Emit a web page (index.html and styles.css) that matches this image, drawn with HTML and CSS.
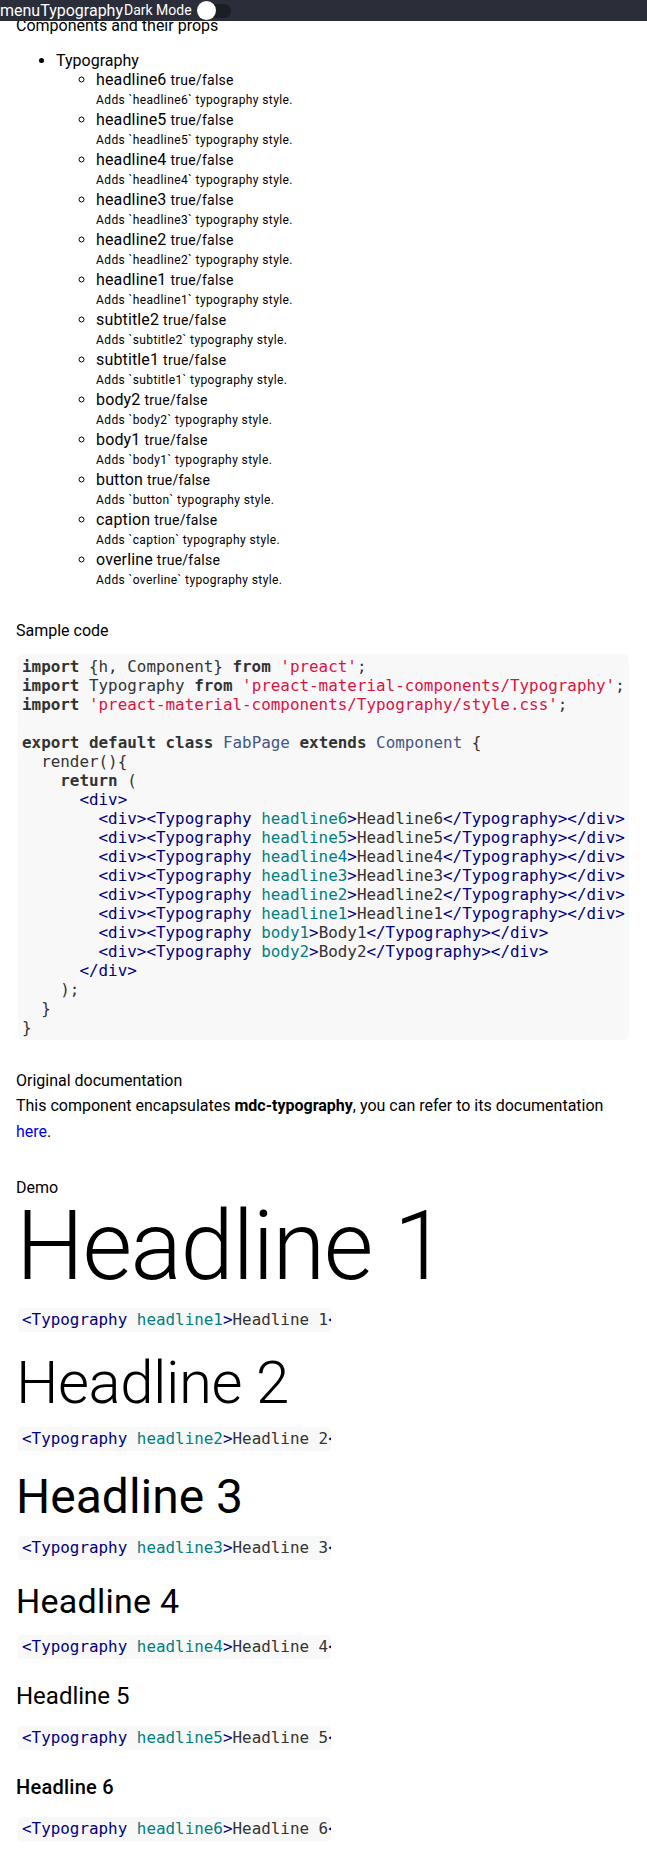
FILE: index.html
```html
<!DOCTYPE html>
<html lang="en">
<head>
<meta charset="utf-8">
<title>Typography</title>
<link rel="stylesheet" href="styles.css">
</head>
<body>
<header class="topbar">
  <span class="menu-label">menu</span><span class="bar-title">Typography</span><span class="mode-label">Dark Mode</span>
  <span class="switch"><span class="switch-track"></span><span class="switch-knob"></span></span>
</header>
<main class="page">
  <div class="intro">Components and their props</div>
  <ul class="comp-list">
    <li class="comp">Typography
      <ul class="prop-list">
        <li class="prop"><div class="prop-head"><span class="prop-name">headline6</span> <span class="prop-type">true/false</span></div><div class="prop-desc">Adds `headline6` typography style.</div></li>
        <li class="prop"><div class="prop-head"><span class="prop-name">headline5</span> <span class="prop-type">true/false</span></div><div class="prop-desc">Adds `headline5` typography style.</div></li>
        <li class="prop"><div class="prop-head"><span class="prop-name">headline4</span> <span class="prop-type">true/false</span></div><div class="prop-desc">Adds `headline4` typography style.</div></li>
        <li class="prop"><div class="prop-head"><span class="prop-name">headline3</span> <span class="prop-type">true/false</span></div><div class="prop-desc">Adds `headline3` typography style.</div></li>
        <li class="prop"><div class="prop-head"><span class="prop-name">headline2</span> <span class="prop-type">true/false</span></div><div class="prop-desc">Adds `headline2` typography style.</div></li>
        <li class="prop"><div class="prop-head"><span class="prop-name">headline1</span> <span class="prop-type">true/false</span></div><div class="prop-desc">Adds `headline1` typography style.</div></li>
        <li class="prop"><div class="prop-head"><span class="prop-name">subtitle2</span> <span class="prop-type">true/false</span></div><div class="prop-desc">Adds `subtitle2` typography style.</div></li>
        <li class="prop"><div class="prop-head"><span class="prop-name">subtitle1</span> <span class="prop-type">true/false</span></div><div class="prop-desc">Adds `subtitle1` typography style.</div></li>
        <li class="prop"><div class="prop-head"><span class="prop-name">body2</span> <span class="prop-type">true/false</span></div><div class="prop-desc">Adds `body2` typography style.</div></li>
        <li class="prop"><div class="prop-head"><span class="prop-name">body1</span> <span class="prop-type">true/false</span></div><div class="prop-desc">Adds `body1` typography style.</div></li>
        <li class="prop"><div class="prop-head"><span class="prop-name">button</span> <span class="prop-type">true/false</span></div><div class="prop-desc">Adds `button` typography style.</div></li>
        <li class="prop"><div class="prop-head"><span class="prop-name">caption</span> <span class="prop-type">true/false</span></div><div class="prop-desc">Adds `caption` typography style.</div></li>
        <li class="prop"><div class="prop-head"><span class="prop-name">overline</span> <span class="prop-type">true/false</span></div><div class="prop-desc">Adds `overline` typography style.</div></li>
      </ul>
    </li>
  </ul>

  <div class="section-title">Sample code</div>
<pre class="code"><code><span class="kw">import</span> {h, Component} <span class="kw">from</span> <span class="str">'preact'</span>;
<span class="kw">import</span> Typography <span class="kw">from</span> <span class="str">'preact-material-components/Typography'</span>;
<span class="kw">import</span> <span class="str">'preact-material-components/Typography/style.css'</span>;

<span class="kw">export</span> <span class="kw">default</span> <span class="kw">class</span> <span class="title">FabPage</span> <span class="kw">extends</span> <span class="title">Component</span> {
  render(){
    <span class="kw">return</span> (
      <span class="tag">&lt;div&gt;</span>
        <span class="tag">&lt;div&gt;&lt;Typography</span> <span class="attr">headline6</span><span class="tag">&gt;</span>Headline6<span class="tag">&lt;/Typography&gt;&lt;/div&gt;</span>
        <span class="tag">&lt;div&gt;&lt;Typography</span> <span class="attr">headline5</span><span class="tag">&gt;</span>Headline5<span class="tag">&lt;/Typography&gt;&lt;/div&gt;</span>
        <span class="tag">&lt;div&gt;&lt;Typography</span> <span class="attr">headline4</span><span class="tag">&gt;</span>Headline4<span class="tag">&lt;/Typography&gt;&lt;/div&gt;</span>
        <span class="tag">&lt;div&gt;&lt;Typography</span> <span class="attr">headline3</span><span class="tag">&gt;</span>Headline3<span class="tag">&lt;/Typography&gt;&lt;/div&gt;</span>
        <span class="tag">&lt;div&gt;&lt;Typography</span> <span class="attr">headline2</span><span class="tag">&gt;</span>Headline2<span class="tag">&lt;/Typography&gt;&lt;/div&gt;</span>
        <span class="tag">&lt;div&gt;&lt;Typography</span> <span class="attr">headline1</span><span class="tag">&gt;</span>Headline1<span class="tag">&lt;/Typography&gt;&lt;/div&gt;</span>
        <span class="tag">&lt;div&gt;&lt;Typography</span> <span class="attr">body1</span><span class="tag">&gt;</span>Body1<span class="tag">&lt;/Typography&gt;&lt;/div&gt;</span>
        <span class="tag">&lt;div&gt;&lt;Typography</span> <span class="attr">body2</span><span class="tag">&gt;</span>Body2<span class="tag">&lt;/Typography&gt;&lt;/div&gt;</span>
      <span class="tag">&lt;/div&gt;</span>
    );
  }
}</code></pre>

  <div class="section-title doc-title">Original documentation</div>
  <p class="doc-text">This component encapsulates <strong>mdc-typography</strong>, you can refer to its documentation <a class="doc-link" href="#">here</a>.</p>

  <div class="demo-title">Demo</div>

  <div class="demo">
    <div class="headline1">Headline 1</div>
    <pre class="snippet"><span class="tag">&lt;Typography</span> <span class="attr">headline1</span><span class="tag">&gt;</span>Headline 1<span class="tag">&lt;/Typography&gt;</span></pre>
  </div>
  <div class="demo">
    <div class="headline2">Headline 2</div>
    <pre class="snippet"><span class="tag">&lt;Typography</span> <span class="attr">headline2</span><span class="tag">&gt;</span>Headline 2<span class="tag">&lt;/Typography&gt;</span></pre>
  </div>
  <div class="demo">
    <div class="headline3">Headline 3</div>
    <pre class="snippet"><span class="tag">&lt;Typography</span> <span class="attr">headline3</span><span class="tag">&gt;</span>Headline 3<span class="tag">&lt;/Typography&gt;</span></pre>
  </div>
  <div class="demo">
    <div class="headline4">Headline 4</div>
    <pre class="snippet"><span class="tag">&lt;Typography</span> <span class="attr">headline4</span><span class="tag">&gt;</span>Headline 4<span class="tag">&lt;/Typography&gt;</span></pre>
  </div>
  <div class="demo">
    <div class="headline5">Headline 5</div>
    <pre class="snippet"><span class="tag">&lt;Typography</span> <span class="attr">headline5</span><span class="tag">&gt;</span>Headline 5<span class="tag">&lt;/Typography&gt;</span></pre>
  </div>
  <div class="demo">
    <div class="headline6">Headline 6</div>
    <pre class="snippet"><span class="tag">&lt;Typography</span> <span class="attr">headline6</span><span class="tag">&gt;</span>Headline 6<span class="tag">&lt;/Typography&gt;</span></pre>
  </div>
</main>
</body>
</html>
```

FILE: styles.css
```css
* { box-sizing: border-box; }

html, body {
  margin: 0;
  padding: 0;
  background: #fff;
}

body {
  font-family: Roboto, "Noto Sans", "Liberation Sans", sans-serif;
  font-size: 16px;
  color: #000;
}

/* top app bar */
.topbar {
  position: fixed;
  top: 0;
  left: 0;
  right: 0;
  height: 21px;
  background: #2b2d38;
  color: #fff;
  display: flex;
  align-items: center;
  white-space: nowrap;
  z-index: 10;
}

.menu-label,
.bar-title {
  font-size: 16px;
  line-height: 21px;
}

.mode-label {
  font-size: 14px;
  line-height: 21px;
  margin-left: 1px;
}

.switch {
  position: relative;
  width: 36px;
  height: 21px;
  margin-left: 5px;
}

.switch-track {
  position: absolute;
  left: 2px;
  top: 4px;
  width: 32px;
  height: 14px;
  border-radius: 7px;
  background: #1c1e26;
}

.switch-knob {
  position: absolute;
  left: 0;
  top: 1px;
  width: 19px;
  height: 19px;
  border-radius: 50%;
  background: #fff;
}

/* page */
.page {
  padding: 16px 16px 40px;
}

.intro {
  line-height: 19px;
}

.comp-list {
  margin: 16px 0 0;
  padding-left: 40px;
  line-height: 19px;
}

.prop-list {
  margin: 0;
  padding-left: 40px;
  list-style: circle;
}

.prop-head {
  line-height: 20px;
  height: 20px;
}

.prop-name {
  font-size: 16px;
  letter-spacing: 0.15px;
}

.prop-type {
  font-size: 14px;
  letter-spacing: 0.25px;
}

.prop-desc {
  font-size: 12px;
  line-height: 20px;
  letter-spacing: 0.4px;
}

.section-title {
  margin-top: 29px;
  line-height: 24px;
}

/* code */
.code {
  margin: 11px 2px 0;
  padding: 3px 4px;
  background: #f8f8f8;
  border-radius: 6px;
  font-family: "DejaVu Sans Mono", "Liberation Mono", monospace;
  font-size: 15.9px;
  line-height: 19px;
  color: #333;
  overflow: hidden;
}

.code code {
  font-family: inherit;
  font-size: inherit;
}

.kw { font-weight: bold; color: #333; }
.str { color: #dd1144; }
.title { color: #445588; }
.tag { color: #000080; }
.attr { color: #008080; }

.doc-title {
  margin-top: 29px;
}

.doc-text {
  margin: 0;
  line-height: 26px;
}

.doc-link {
  color: #0000ee;
  text-decoration: none;
}

.demo-title {
  margin-top: 33px;
  line-height: 20px;
}

/* demo headlines */
.headline1 {
  font-size: 96px;
  font-weight: 300;
  line-height: 96px;
  letter-spacing: -1.5px;
}

.headline2 {
  font-size: 60px;
  font-weight: 300;
  line-height: 60px;
  letter-spacing: -0.5px;
}

.headline3 {
  font-size: 48px;
  font-weight: 400;
  line-height: 50px;
}

.headline4 {
  font-size: 34px;
  font-weight: 400;
  line-height: 40px;
  letter-spacing: 0.25px;
}

.headline5 {
  font-size: 24px;
  font-weight: 400;
  line-height: 32px;
}

.headline6 {
  font-size: 20px;
  font-weight: 500;
  line-height: 32px;
  letter-spacing: 0.25px;
}

.snippet {
  width: 313px;
  height: 24px;
  margin: 14px 2px 21px;
  padding: 0 4px;
  background: #f8f8f8;
  border-radius: 4px;
  font-family: "DejaVu Sans Mono", "Liberation Mono", monospace;
  font-size: 15.9px;
  line-height: 24px;
  color: #333;
  white-space: pre;
  overflow: hidden;
}
```
